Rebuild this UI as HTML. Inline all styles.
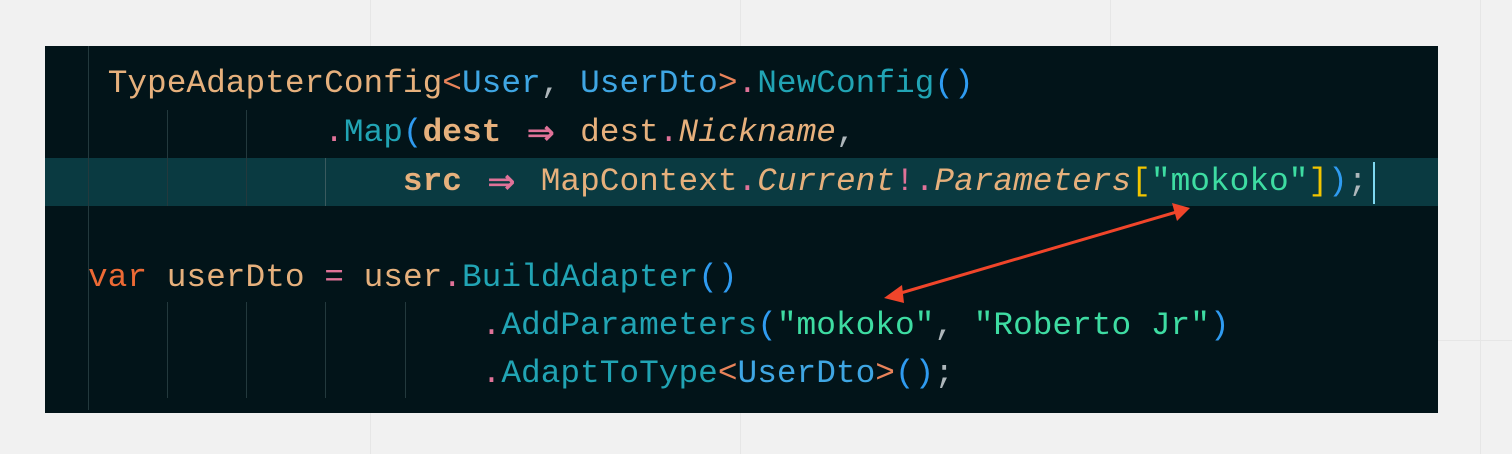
<!DOCTYPE html>
<html><head><meta charset="utf-8"><style>
html,body{margin:0;padding:0;width:1512px;height:454px;overflow:hidden;background:#f1f1f1;position:relative}
.grid{position:absolute;background:#e6e6e6}
.code{position:absolute;left:45px;top:46px;width:1393px;height:367px;background:#021419}
.hl{position:absolute;left:0;top:112px;width:1393px;height:48px;background:#0a3a41}
.g{position:absolute;width:1px;background:#23393d}
.ln{position:absolute;left:43px;height:48px;line-height:48px;font-family:"Liberation Mono",monospace;font-size:32.8px;white-space:pre;color:#e6b07c}
.o{color:#e6b07c}.b{color:#3fa6e3}.t{color:#21a4b4}.p{color:#e07298}.s{color:#3edca2}.y{color:#f2c500}.v{color:#ec6a35}.w{color:#aeb7bb}.br{color:#2f9bf0}.lt{color:#e8835a}
.bd{font-weight:bold}.i{font-style:italic}
.ar{display:inline-block;width:39.4px;text-align:center;color:#e07298;font-family:"DejaVu Sans",sans-serif;font-weight:bold;font-size:34px;vertical-align:top}
</style></head><body>
<div class="grid" style="left:370px;top:0;width:1px;height:46px"></div>
<div class="grid" style="left:740px;top:0;width:1px;height:46px"></div>
<div class="grid" style="left:1110px;top:0;width:1px;height:46px"></div>
<div class="grid" style="left:1480px;top:0;width:1px;height:454px"></div>
<div class="grid" style="left:740px;top:413px;width:1px;height:41px"></div>
<div class="grid" style="left:370px;top:413px;width:1px;height:41px"></div>
<div class="grid" style="left:1438px;top:340px;width:74px;height:1px"></div>
<div class="code">
<div class="hl"></div>
<div class="g" style="left:43px;top:0;height:364px"></div>
<div class="g" style="left:122px;top:64px;height:96px"></div>
<div class="g" style="left:201px;top:64px;height:96px"></div>
<div class="g" style="left:280px;top:112px;height:48px;background:#3a5a5e"></div>
<div class="g" style="left:122px;top:256px;height:96px"></div>
<div class="g" style="left:201px;top:256px;height:96px"></div>
<div class="g" style="left:280px;top:256px;height:96px"></div>
<div class="g" style="left:360px;top:256px;height:96px"></div>
<div class="ln" style="top:14px"> <span class="o">TypeAdapterConfig</span><span class="lt">&lt;</span><span class="b">User</span><span class="w">, </span><span class="b">UserDto</span><span class="lt">&gt;</span><span class="p">.</span><span class="t">NewConfig</span><span class="br">()</span></div>
<div class="ln" style="top:63px">            <span class="p">.</span><span class="t">Map</span><span class="br">(</span><span class="o bd">dest</span> <span class="ar">⇒</span> <span class="o">dest</span><span class="p">.</span><span class="o i">Nickname</span><span class="w">,</span></div>
<div class="ln" style="top:112px">                <span class="o bd">src</span> <span class="ar">⇒</span> <span class="o">MapContext</span><span class="p">.</span><span class="o i">Current</span><span class="p">!.</span><span class="o i">Parameters</span><span class="y">[</span><span class="s">"mokoko"</span><span class="y">]</span><span class="br">)</span><span class="w">;</span></div>
<div style="position:absolute;left:1328px;top:116px;width:2px;height:42px;background:#7fd8f0"></div>
<div class="ln" style="top:208px"><span class="v">var</span> <span class="o">userDto</span> <span class="p">=</span> <span class="o">user</span><span class="p">.</span><span class="t">BuildAdapter</span><span class="br">()</span></div>
<div class="ln" style="top:256px">                    <span class="p">.</span><span class="t">AddParameters</span><span class="br">(</span><span class="s">"mokoko"</span><span class="w">, </span><span class="s">"Roberto Jr"</span><span class="br">)</span></div>
<div class="ln" style="top:304px">                    <span class="p">.</span><span class="t">AdaptToType</span><span class="lt">&lt;</span><span class="b">UserDto</span><span class="lt">&gt;</span><span class="br">()</span><span class="w">;</span></div>
</div>
<svg style="position:absolute;left:0;top:0" width="1512" height="454">
<line x1="1180" y1="211" x2="894" y2="295" stroke="#f0452a" stroke-width="3"/>
<polygon points="1190,208 1172,203 1177,221" fill="#f0452a"/>
<polygon points="884,298 902,285 904,303" fill="#f0452a"/>
</svg>
</body></html>
